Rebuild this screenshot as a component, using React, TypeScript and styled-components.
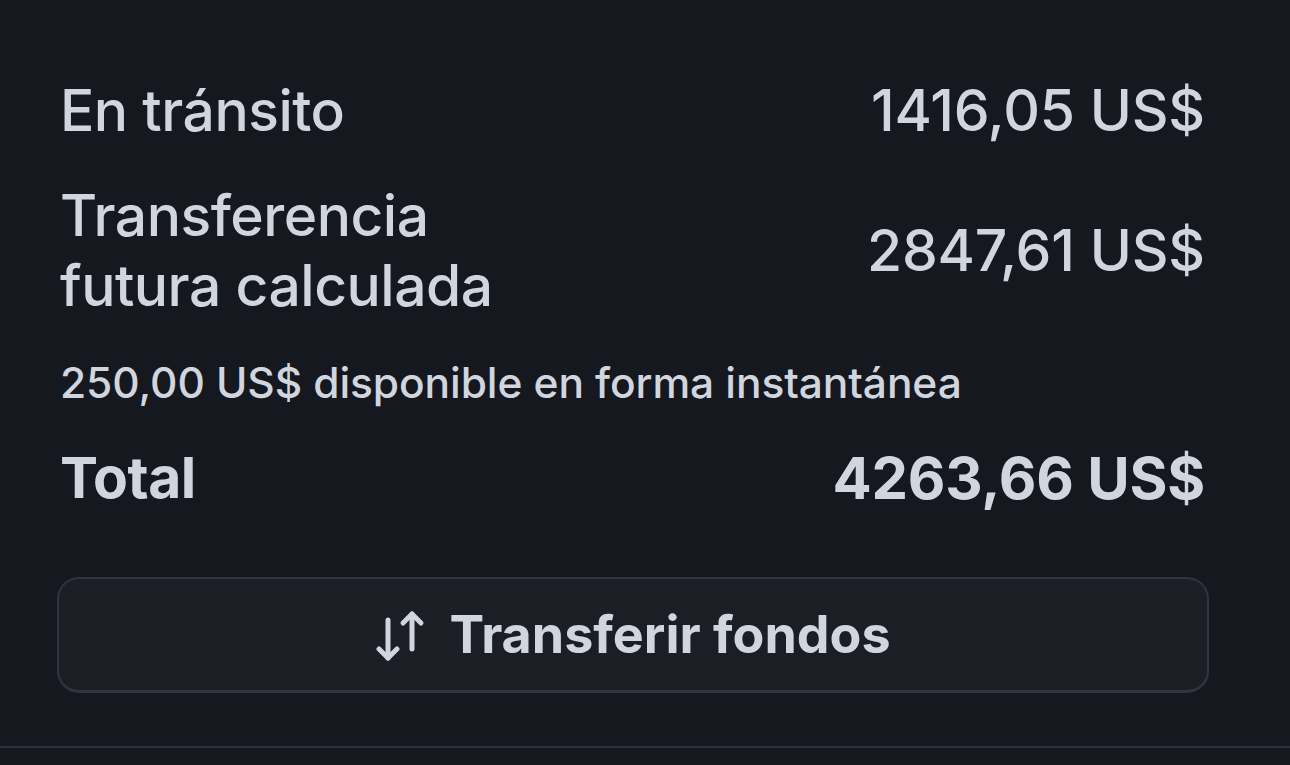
import styled, { createGlobalStyle } from "styled-components";

const GlobalStyle = createGlobalStyle`
  html, body {
    margin: 0;
    padding: 0;
    background-color: #15181f;
  }

  body {
    font-family: Inter, "Noto Sans", sans-serif;
    color: #d1d5de;
    -webkit-font-smoothing: antialiased;
  }
`;

const Page = styled.div`
  width: 1290px;
  height: 765px;
  overflow: hidden;
`;

const Summary = styled.section`
  padding: 76px 85px 53px 60px;
  display: flex;
  flex-direction: column;
  border-bottom: 2px solid #2c3038;
`;

const Row = styled.div<{ $gap?: number }>`
  display: flex;
  justify-content: space-between;
  align-items: center;
  margin-bottom: ${(props) => props.$gap ?? 0}px;
`;

const Label = styled.div<{ $bold?: boolean }>`
  font-size: 57px;
  line-height: 70px;
  font-weight: ${(props) => (props.$bold ? 700 : 500)};
  letter-spacing: -0.5px;
`;

const Amount = styled.div<{ $bold?: boolean }>`
  font-size: ${(props) => (props.$bold ? 58 : 57)}px;
  line-height: 70px;
  font-weight: ${(props) => (props.$bold ? 700 : 500)};
  letter-spacing: -0.2px;
  text-align: right;
`;

const Note = styled.p`
  margin: 0 0 34px;
  font-size: 42.5px;
  line-height: 52px;
  font-weight: 500;
  letter-spacing: -0.1px;
`;

const TransferButton = styled.button`
  margin: 64px -4px 0 -3px;
  height: 116px;
  flex-shrink: 0;
  box-sizing: border-box;
  border: 2px solid #30343c;
  border-bottom-width: 3px;
  border-radius: 22px;
  background-color: #1b1e25;
  color: #d1d5de;
  font-family: Inter, "Noto Sans", sans-serif;
  font-size: 52px;
  font-weight: 700;
  display: flex;
  align-items: center;
  justify-content: center;
  gap: 22px;
  cursor: pointer;
`;

const SwapIcon = () => (
  <svg width="52" height="52" viewBox="0 0 52 52" fill="none">
    <g stroke="#d1d5de" strokeWidth="5" strokeLinecap="round" strokeLinejoin="round">
      <path d="M13 11v38" />
      <path d="M4 40l9 9 9-9" />
      <path d="M37 5v35" />
      <path d="M28 14l9-9 9 9" />
    </g>
  </svg>
);

export default function App() {
  return (
    <Page>
      <GlobalStyle />
      <Summary>
        <Row $gap={35}>
          <Label>En tránsito</Label>
          <Amount>1416,05 US$</Amount>
        </Row>
        <Row $gap={36}>
          <Label>
            Transferencia
            <br />
            futura calculada
          </Label>
          <Amount>2847,61 US$</Amount>
        </Row>
        <Note>250,00 US$ disponible en forma instantánea</Note>
        <Row>
          <Label $bold>Total</Label>
          <Amount $bold>4263,66 US$</Amount>
        </Row>
        <TransferButton>
          <SwapIcon />
          Transferir fondos
        </TransferButton>
      </Summary>
    </Page>
  );
}
